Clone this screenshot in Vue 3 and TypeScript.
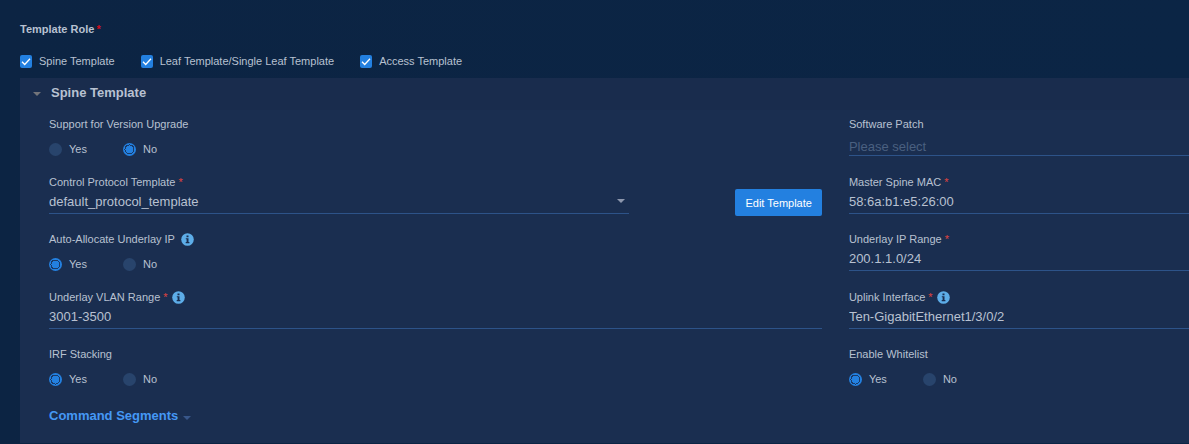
<script setup lang="ts">
import { reactive, ref } from 'vue'

interface Role {
  id: string
  label: string
  checked: boolean
}

interface Field {
  id: string
  label: string
  kind: 'radio' | 'text' | 'select' | 'picker'
  required?: boolean
  info?: boolean
  value: string
  placeholder?: string
}

const roles = reactive<Role[]>([
  { id: 'spine', label: 'Spine Template', checked: true },
  { id: 'leaf', label: 'Leaf Template/Single Leaf Template', checked: true },
  { id: 'access', label: 'Access Template', checked: true },
])

const fields = reactive<Field[]>([
  { id: 'upgrade', label: 'Support for Version Upgrade', kind: 'radio', value: 'No' },
  { id: 'patch', label: 'Software Patch', kind: 'picker', value: '', placeholder: 'Please select' },
  { id: 'protocol', label: 'Control Protocol Template', kind: 'select', required: true, value: 'default_protocol_template' },
  { id: 'mac', label: 'Master Spine MAC', kind: 'text', required: true, value: '58:6a:b1:e5:26:00' },
  { id: 'autoip', label: 'Auto-Allocate Underlay IP', kind: 'radio', info: true, value: 'Yes' },
  { id: 'iprange', label: 'Underlay IP Range', kind: 'text', required: true, value: '200.1.1.0/24' },
  { id: 'vlan', label: 'Underlay VLAN Range', kind: 'text', required: true, info: true, value: '3001-3500' },
  { id: 'uplink', label: 'Uplink Interface', kind: 'text', required: true, info: true, value: 'Ten-GigabitEthernet1/3/0/2' },
  { id: 'irf', label: 'IRF Stacking', kind: 'radio', value: 'Yes' },
  { id: 'whitelist', label: 'Enable Whitelist', kind: 'radio', value: 'Yes' },
])

const options = ['Yes', 'No']
const open = ref(true)
</script>

<template>
  <main class="page">
    <fieldset class="roles">
      <legend class="roles-title">Template Role<span class="star strong">*</span></legend>
      <div class="role-list">
        <label v-for="role in roles" :key="role.id" class="role">
          <span class="check">
            <input v-model="role.checked" type="checkbox" />
            <svg viewBox="0 0 12 13" aria-hidden="true"><path d="M2 6.8 4.7 9.5 10 3.7" /></svg>
          </span>
          {{ role.label }}
        </label>
      </div>
    </fieldset>

    <section class="panel">
      <h2 class="panel-head">
        <button type="button" class="toggle" :aria-expanded="open" @click="open = !open">
          <svg class="caret" viewBox="0 0 8 4" aria-hidden="true"><path d="M0 0h8L4 4z" /></svg>
          Spine Template
        </button>
      </h2>

      <div v-show="open" class="panel-body">
        <div class="grid">
          <div v-for="field in fields" :key="field.id" class="cell">
            <div
              class="field"
              :class="{ narrow: field.kind === 'select' }"
              :role="field.kind === 'radio' ? 'radiogroup' : undefined"
              :aria-labelledby="field.kind === 'radio' ? field.id + '-label' : undefined"
            >
              <component
                :is="field.kind === 'radio' ? 'span' : 'label'"
                :id="field.id + '-label'"
                :for="field.kind === 'radio' ? undefined : field.id"
                class="label"
              >
                {{ field.label }}
                <span v-if="field.required" class="star">*</span>
                <svg v-if="field.info" class="info" :class="{ spaced: !field.required }" viewBox="0 0 13 13" aria-hidden="true">
                  <circle cx="6.5" cy="6.5" r="6.3" />
                  <path d="M5.5 2.4h2v1.8h-2zM4.8 5.2h2.7v3.9h.9v1.1H4.7V9.1h.9V6.3h-.8z" />
                </svg>
              </component>

              <div v-if="field.kind === 'radio'" class="radios">
                <label v-for="option in options" :key="option" class="radio">
                  <input v-model="field.value" type="radio" :name="field.id" :value="option" />
                  {{ option }}
                </label>
              </div>
              <div v-else-if="field.kind === 'select'" class="select">
                <select :id="field.id" v-model="field.value" class="control">
                  <option>default_protocol_template</option>
                </select>
                <svg class="arrow" viewBox="0 0 8 4" aria-hidden="true"><path d="M0 0h8L4 4z" /></svg>
              </div>
              <input
                v-else
                :id="field.id"
                v-model="field.value"
                class="control"
                :class="{ picker: field.kind === 'picker' }"
                type="text"
                :placeholder="field.placeholder"
              />
            </div>
            <button v-if="field.kind === 'select'" type="button" class="edit">Edit Template</button>
          </div>
        </div>

        <button type="button" class="segments">
          Command Segments
          <svg class="caret" viewBox="0 0 8 4" aria-hidden="true"><path d="M0 0h8L4 4z" /></svg>
        </button>
      </div>
    </section>
  </main>
</template>

<style>
body {
  background: #0a2342;
}
</style>

<style scoped>
.page {
  box-sizing: border-box;
  padding: 20px 0 2px 20px;
  background: linear-gradient(90deg, #0c2443, #0b2545);
  color: #b8c1d1;
  font: 11px/16px "Liberation Sans", Arial, sans-serif;
}

button,
input,
select {
  margin: 0;
  font-family: inherit;
}

.roles {
  margin: 0;
  padding: 0;
  border: 0;
  min-width: 0;
}

.roles-title {
  padding: 0;
  font-weight: bold;
  line-height: 18px;
}

.star {
  color: #e0433f;
}

.star.strong {
  margin-left: 2px;
  color: #d00d1c;
}

.role-list {
  display: flex;
  flex-wrap: wrap;
  gap: 26px;
  padding: 15px 0 8px;
}

.role {
  display: flex;
  align-items: center;
  gap: 7px;
  line-height: 17px;
}

.check {
  display: grid;
  width: 12px;
  height: 13px;
}

.check > * {
  grid-area: 1 / 1;
}

.check input {
  appearance: none;
  width: 12px;
  height: 13px;
  border-radius: 2px;
  background: #28446c;
}

.check input:checked {
  background: #2380e0;
}

.check svg {
  width: 12px;
  height: 13px;
  fill: none;
  stroke: #fff;
  stroke-width: 1.3;
  pointer-events: none;
}

.check input:not(:checked) + svg {
  visibility: hidden;
}

.panel {
  background: #1a2e50;
}

.panel-head {
  margin: 0;
  padding: 0 13px;
  background: #192c4d;
  font-size: 13px;
}

.toggle,
.segments {
  display: flex;
  align-items: center;
  padding: 0;
  border: 0;
  background: none;
  font-size: 13px;
  font-weight: bold;
}

.toggle {
  gap: 10px;
  height: 32px;
  padding-bottom: 4px;
  color: #b8c1d1;
}

.caret,
.arrow {
  width: 8px;
  height: 4px;
  fill: #73747a;
}

.toggle .caret {
  margin-top: 4px;
}

.panel-body {
  padding: 6px 0 19px 29px;
}

.grid {
  display: grid;
  grid-template-columns: minmax(0, 25fr) minmax(0, 11fr);
  gap: 17px 27px;
}

.cell {
  display: flex;
  align-items: flex-start;
  justify-content: space-between;
}

.field {
  display: flex;
  flex-direction: column;
  width: 100%;
}

.field.narrow {
  width: 75%;
}

.label {
  display: flex;
  align-items: center;
  gap: 3px;
  height: 16px;
}

.info {
  width: 13px;
  height: 13px;
  margin-left: 1px;
}

.info.spaced {
  margin-left: 3px;
}

.info circle {
  fill: #5dade8;
}

.info path {
  fill: #1a2e50;
}

.control {
  box-sizing: border-box;
  width: 100%;
  height: 24px;
  padding: 0;
  border: 0;
  border-bottom: 1px solid #2d5389;
  border-radius: 0;
  outline: 0;
  appearance: none;
  background: transparent;
  color: #b8c1d1;
  font-size: 13px;
}

.control.picker {
  padding: 6px 0 0;
}

.control::placeholder {
  color: #4a6080;
}

.select {
  display: grid;
  align-items: center;
}

.select > * {
  grid-area: 1 / 1;
}

.arrow {
  justify-self: end;
  margin: 0 4px 2px 0;
  fill: #8d97ad;
  pointer-events: none;
}

.edit {
  flex: none;
  height: 27px;
  margin: 15px 0 -3px;
  padding: 0 10px;
  border: 0;
  border-radius: 2px;
  background: #2380e0;
  color: #fff;
  font-size: 11px;
}

.radios {
  display: flex;
  padding-top: 9px;
}

.radio {
  display: flex;
  align-items: center;
  gap: 7px;
  min-width: 74px;
}

.radio input {
  appearance: none;
  width: 13px;
  height: 13px;
  border-radius: 50%;
  background: #28446c;
}

.radio input:checked {
  background: radial-gradient(circle, #2380e0 4px, #1a3a68 4px, #1a3a68 5px, #2380e0 5px);
}

.segments {
  gap: 5px;
  margin-top: 21px;
  color: #4598f5;
  line-height: 16px;
}

.segments .caret {
  margin-top: 4px;
  fill: #38578a;
}
</style>
